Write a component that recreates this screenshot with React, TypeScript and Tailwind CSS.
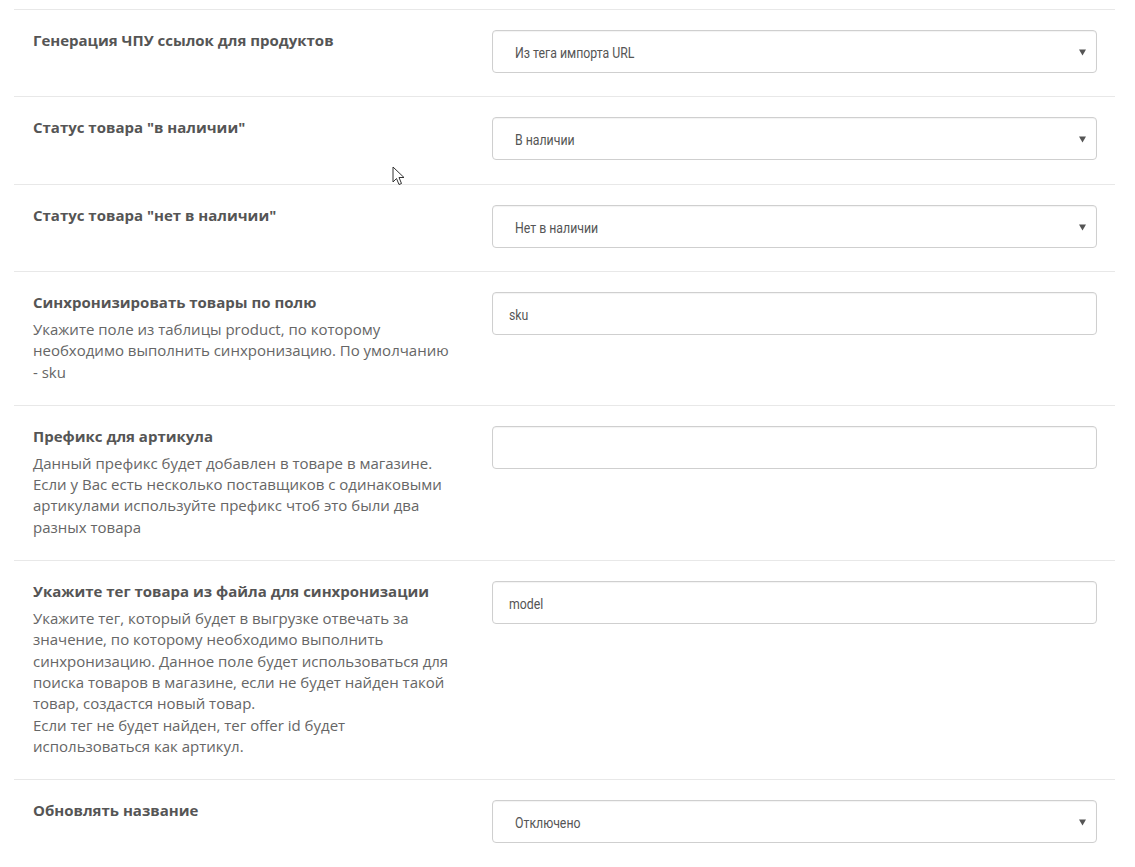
import React from "react";

type Row = {
  title: string;
  desc?: React.ReactNode;
  kind: "select" | "input";
  value: string;
  extra?: boolean;
};

const rows: Row[] = [
  { title: "Генерация ЧПУ ссылок для продуктов", kind: "select", value: "Из тега импорта URL" },
  { title: 'Статус товара "в наличии"', kind: "select", value: "В наличии", extra: true },
  { title: 'Статус товара "нет в наличии"', kind: "select", value: "Нет в наличии" },
  {
    title: "Синхронизировать товары по полю",
    desc: "Укажите поле из таблицы product, по которому необходимо выполнить синхронизацию. По умолчанию - sku",
    kind: "input",
    value: "sku",
  },
  {
    title: "Префикс для артикула",
    desc: "Данный префикс будет добавлен в товаре в магазине. Если у Вас есть несколько поставщиков с одинаковыми артикулами используйте префикс чтоб это были два разных товара",
    kind: "input",
    value: "",
  },
  {
    title: "Укажите тег товара из файла для синхронизации",
    desc: (
      <>
        Укажите тег, который будет в выгрузке отвечать за значение, по которому необходимо выполнить синхронизацию. Данное поле будет использоваться для поиска товаров в магазине, если не будет найден такой товар, создастся новый товар.
        <br />
        Если тег не будет найден, тег offer id будет использоваться как артикул.
      </>
    ),
    kind: "input",
    value: "model",
  },
  { title: "Обновлять название", kind: "select", value: "Отключено", extra: true },
];

function Value({ text }: { text: string }) {
  return (
    <span
      className="mt-[3px] inline-block origin-left scale-x-[0.82] whitespace-nowrap text-[15px] leading-[20px] text-[#555]"
      style={{ fontFamily: "Roboto, 'Noto Sans', sans-serif" }}
    >
      {text}
    </span>
  );
}

function Field({ row }: { row: Row }) {
  const mb = row.extra ? "mb-[2px]" : "mb-px";
  if (row.kind === "select") {
    return (
      <div className={`relative ${mb} flex h-[43px] items-center rounded-[4px] border border-[#cfcfcf] bg-white pl-[22px] pr-[30px] shadow-[inset_0_1px_1px_rgba(0,0,0,0.05)]`}>
        <Value text={row.value} />
        <svg className="absolute right-[10px] top-[18px]" width="7" height="7" viewBox="0 0 7 7">
          <path d="M0 0.5 H7 L3.5 6.5 Z" fill="#555" />
        </svg>
      </div>
    );
  }
  return (
    <div className={`${mb} flex h-[43px] items-center rounded-[4px] border border-[#cfcfcf] bg-white pl-[16px] shadow-[inset_0_1px_1px_rgba(0,0,0,0.05)]`}>
      <Value text={row.value} />
    </div>
  );
}

export default function App() {
  return (
    <div className="relative min-h-[867px] w-[1135px] bg-white pt-[9px]" style={{ fontFamily: "'Open Sans', sans-serif" }}>
      <div className="mx-[14px] w-[1101px] border-b border-[#e8e8e8]">
        {rows.map((r, i) => (
          <div key={i} className="flex border-t border-[#e8e8e8] pt-[20px] pb-[22px]">
            <div className="w-[463px] shrink-0 pl-[19px] pr-[22px]">
              <div className="text-[15px] font-bold leading-[21px] text-[#555]">{r.title}</div>
              {r.desc && (
                <div className="mt-[6px] text-[15px] leading-[21.3px] text-[#666]">{r.desc}</div>
              )}
            </div>
            <div className="flex-1 pl-[15px] pr-[18px]">
              <Field row={r} />
            </div>
          </div>
        ))}
      </div>
      <svg className="absolute left-[392px] top-[166px]" width="13" height="20" viewBox="0 0 13 20">
        <path d="M1 1 V16 L4.5 12.5 L7 18.5 L9.5 17.5 L7 11.5 H12 Z" fill="#fff" stroke="#333" strokeWidth="1" strokeLinejoin="round" />
      </svg>
    </div>
  );
}
